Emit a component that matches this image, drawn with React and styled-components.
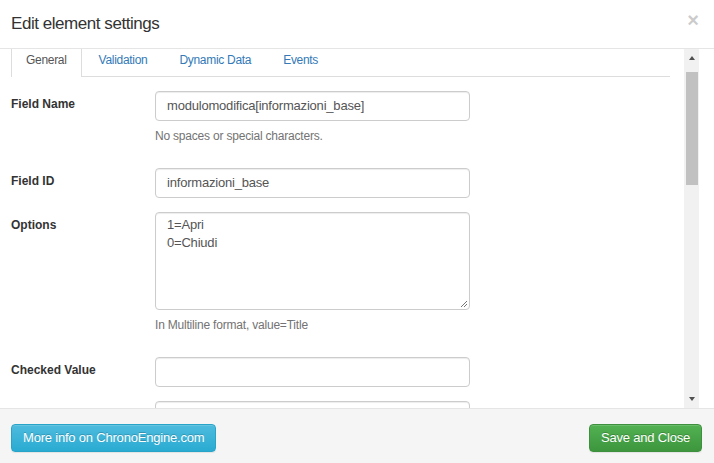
import React from "react";
import styled, { createGlobalStyle } from "styled-components";

const GlobalStyle = createGlobalStyle`
  html, body { margin: 0; padding: 0; background: #fff; }
  body {
    font-family: "Liberation Sans", Arial, sans-serif;
    font-size: 13px;
    color: #333;
  }
  * { box-sizing: border-box; }
`;

const Modal = styled.div`
  width: 714px;
  height: 463px;
  display: flex;
  flex-direction: column;
  background: #fff;
  overflow: hidden;
`;

const Header = styled.div`
  display: flex;
  align-items: flex-start;
  justify-content: space-between;
  padding: 11px 15px 10px 11px;
  height: 49px;
  border-bottom: 1px solid #e5e5e5;
`;

const Title = styled.h4`
  margin: 0;
  font-size: 17px;
  letter-spacing: -0.45px;
  font-weight: normal;
  line-height: 25px;
  color: #333;
`;

const Close = styled.span`
  font-size: 20px;
  font-weight: bold;
  line-height: 16px;
  color: #000;
  opacity: 0.2;
  margin-top: 1px;
`;

const Body = styled.div`
  flex: 1;
  display: flex;
  padding-right: 15px;
  min-height: 0;
`;

const Content = styled.div`
  flex: 1;
  padding: 0 14px 0 11px;
  overflow: hidden;
`;

const Scrollbar = styled.div`
  width: 15px;
  background: #f1f1f1;
  display: flex;
  flex-direction: column;
  align-items: center;
`;

const Arrow = styled.div`
  width: 0;
  height: 0;
  border-left: 3.5px solid transparent;
  border-right: 3.5px solid transparent;
  ${p => (p.down ? "border-top: 4px solid #505050;" : "border-bottom: 4px solid #505050;")}
  margin: ${p => (p.down ? "auto 0 7px" : "7px 0 0")};
`;

const Thumb = styled.div`
  width: 12px;
  height: 113px;
  background: #c1c1c1;
  margin-top: 12px;
`;

const Tabs = styled.ul`
  display: flex;
  list-style: none;
  margin: 0;
  padding: 0;
  border-bottom: 1px solid #ddd;
  height: 28px;
`;

const Tab = styled.li`
  margin-right: 2px;
  padding: 3px 14px 0;
  height: ${p => (p.active ? "28px" : "27px")};
  line-height: 17px;
  font-size: 12px;
  letter-spacing: -0.3px;
  color: ${p => (p.active ? "#555" : "#337ab7")};
  background: ${p => (p.active ? "#fff" : "transparent")};
  border-left: 1px solid ${p => (p.active ? "#ddd" : "transparent")};
  border-right: 1px solid ${p => (p.active ? "#ddd" : "transparent")};
`;

const Form = styled.div`
  padding-top: 14px;
`;

const Group = styled.div`
  display: grid;
  grid-template-columns: 144px 315px;
  margin-bottom: 14px;
`;

const Label = styled.label`
  font-size: 12px;
  font-weight: bold;
  line-height: 17px;
  padding-top: 5px;
  color: #333;
`;

const Field = styled.div`
  display: flex;
  flex-direction: column;
`;

const Input = styled.div`
  height: 30px;
  padding: 5px 11px;
  font-size: 13px;
  letter-spacing: -0.2px;
  line-height: 18px;
  color: #555;
  border: 1px solid #ccc;
  border-radius: 4px;
  box-shadow: inset 0 1px 1px rgba(0, 0, 0, 0.075);
  white-space: pre;
`;

const TextArea = styled(Input)`
  height: 98px;
  padding-top: 3px;
  position: relative;
`;

const Grip = styled.svg`
  position: absolute;
  right: 1px;
  bottom: 1px;
`;

const Help = styled.div`
  margin: 7px 0 9px;
  font-size: 12px;
  letter-spacing: -0.2px;
  line-height: 17px;
  color: #737373;
`;

const Footer = styled.div`
  display: flex;
  justify-content: space-between;
  align-items: flex-start;
  padding: 15px 12px 0 11px;
  height: 55px;
  background: #f5f5f5;
  border-top: 1px solid #e5e5e5;
`;

const Button = styled.button`
  font-family: "Liberation Sans", Arial, sans-serif;
  font-size: 13px;
  letter-spacing: -0.2px;
  line-height: 18px;
  padding: 4px 11px;
  height: 28px;
  border-radius: 4px;
  color: #fff;
  cursor: pointer;
  text-shadow: 0 -1px 0 rgba(0, 0, 0, 0.2);
  box-shadow: inset 0 1px 0 rgba(255, 255, 255, 0.15), 0 1px 1px rgba(0, 0, 0, 0.075);
  &.info {
    background: linear-gradient(to bottom, #4dbbdd 0%, #2aabd2 100%);
    border: 1px solid #28a4c9;
  }
  &.success {
    background: linear-gradient(to bottom, #52b152 0%, #3d963d 100%);
    border: 1px solid #3e8f3e;
  }
`;

const fields = [
  { label: "Field Name", value: "modulomodifica[informazioni_base]", help: "No spaces or special characters." },
  { label: "Field ID", value: "informazioni_base" },
  { label: "Options", value: "1=Apri\n0=Chiudi", multi: true, help: "In Multiline format, value=Title" },
  { label: "Checked Value", value: "" },
  { label: "", value: "" },
];

export default function App() {
  return (
    <Modal>
      <GlobalStyle />
      <Header>
        <Title>Edit element settings</Title>
        <Close>×</Close>
      </Header>
      <Body>
        <Content>
          <Tabs>
            <Tab active>General</Tab>
            <Tab>Validation</Tab>
            <Tab>Dynamic Data</Tab>
            <Tab>Events</Tab>
          </Tabs>
          <Form>
            {fields.map((f, i) => (
              <Group key={i}>
                <Label>{f.label}</Label>
                <Field>
                  {f.multi ? (
                    <TextArea>
                      {f.value}
                      <Grip width="9" height="9" viewBox="0 0 9 9">
                        <path d="M8 2 L2 8 M8 5 L5 8" stroke="#777" strokeWidth="1" />
                      </Grip>
                    </TextArea>
                  ) : (
                    <Input>{f.value}</Input>
                  )}
                  {f.help && <Help>{f.help}</Help>}
                </Field>
              </Group>
            ))}
          </Form>
        </Content>
        <Scrollbar>
          <Arrow />
          <Thumb />
          <Arrow down />
        </Scrollbar>
      </Body>
      <Footer>
        <Button className="info">More info on ChronoEngine.com</Button>
        <Button className="success">Save and Close</Button>
      </Footer>
    </Modal>
  );
}
